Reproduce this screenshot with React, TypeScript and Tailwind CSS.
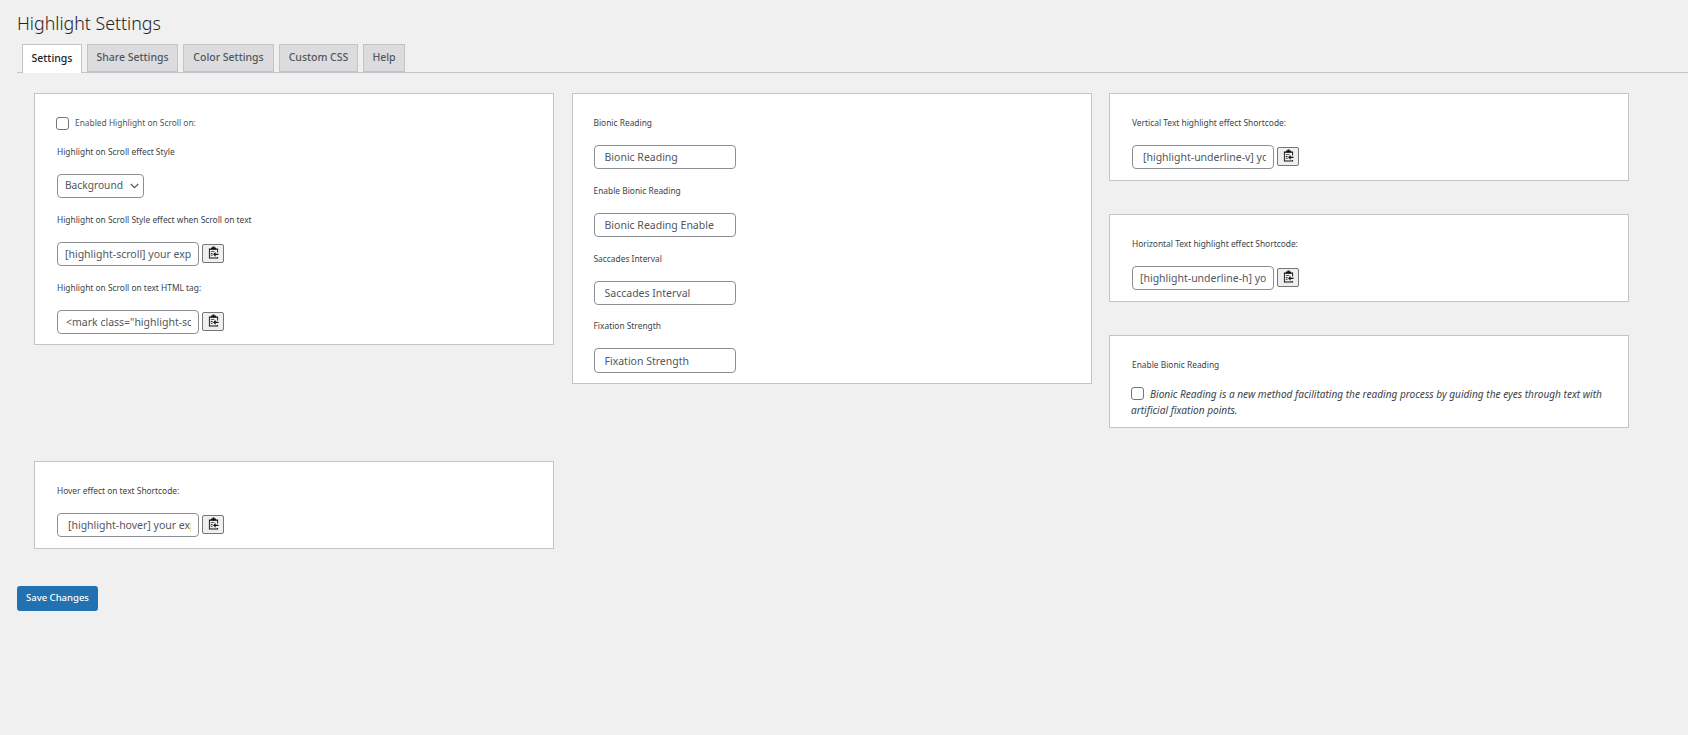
import React from 'react';

const font = 'font-["Noto_Sans","Open_Sans",sans-serif]';

function CopyIcon() {
    return (
        <svg width="11" height="13" viewBox="0 0 12 14" className="block">
            <path d="M1 2.500h2.500V1.500H5V.5h2v1h1.500v1H11V7h-1V4H2v8.500h8V12h1v1.500H1z" fill="#111" />
            <path d="M3.500 2h5v1.500h-5z" fill="#111" />
            <path d="M3 5.500h4v1H3zM3 7.500h2v1H3zM3 9.500h2v1H3z" fill="#333" />
            <path d="M11.500 8.300H8.300V6.500L5.500 9l2.800 2.500V9.700h3.200z" fill="#111" />
        </svg>
    );
}

function ShortcodeField({ value, inset }: { value: string; inset: string }) {
    return (
        <div className="flex items-start gap-[3px]">
            <input
                readOnly
                value={value}
                className={`h-[24px] w-[142px] rounded-[4px] border border-[#8c8f94] bg-white pr-[7px] text-[10.5px] text-[#50575e] outline-none ${inset}`}
            />
            <button type="button" className="mt-[2px] flex h-[19px] w-[22px] items-center justify-center rounded-[2px] border border-[#767676] bg-[#efefef] pb-[2px]">
                <CopyIcon />
            </button>
        </div>
    );
}

function TextField({ value, tall }: { value: string; tall?: boolean }) {
    return (
        <input
            readOnly
            value={value}
            className={`${tall ? 'h-[25px]' : 'h-[24px]'} block w-[142px] rounded-[4px] border border-[#8c8f94] bg-white px-[10px] text-[10.5px] text-[#50575e] outline-none`}
        />
    );
}

function Label({ children }: { children: React.ReactNode }) {
    return <p className="h-[14px] text-[8.4px] leading-[14px] text-[#3c434a]">{children}</p>;
}

function Checkbox() {
    return <input type="checkbox" className="h-[13px] w-[13px] shrink-0 appearance-none rounded-[3px] border border-[#767676] bg-white align-[-2px]" />;
}

function Card({ className, children }: { className?: string; children: React.ReactNode }) {
    return <div className={`border border-[#c3c4c7] bg-white ${className ?? ''}`}>{children}</div>;
}

const tabs = [
    { name: 'Share Settings', width: 'w-[91px]' },
    { name: 'Color Settings', width: 'w-[91px]' },
    { name: 'Custom CSS', width: 'w-[79px]' },
    { name: 'Help', width: 'w-[42px]' },
];

export default function App() {
    return (
        <div className={`h-[735px] w-full overflow-hidden bg-[#f0f0f1] pl-[17px] text-[#3c434a] ${font}`}>
            <h1 className="h-[44px] pt-[8px] text-[17.8px] font-light leading-[30px] text-[#1d2327]">Highlight Settings</h1>

            <div className="flex h-[29px] gap-[5px] border-b border-[#c3c4c7] pl-[5px]">
                <div className="flex h-[29px] w-[60px] items-center justify-center border border-b-0 border-[#c3c4c7] bg-white text-[10.5px] font-medium text-[#1d2327]">
                    Settings
                </div>
                {tabs.map((tab) => (
                    <div key={tab.name} className={`flex h-[28px] items-center justify-center border border-[#c3c4c7] bg-[#dcdcde] text-[10.5px] font-medium text-[#50575e] ${tab.width}`}>
                        {tab.name}
                    </div>
                ))}
            </div>

            <div className="flex gap-[17.5px] pl-[17px] pt-[20px]">
                <div className="flex w-[520px] flex-col gap-[116px]">
                    <Card className="h-[252px] pl-[22px] pt-[22px]">
                        <div className="-ml-[1px] flex h-[14px] items-center gap-[6px]">
                            <Checkbox />
                            <span className="text-[8.4px] text-[#50575e]">Enabled Highlight on Scroll on:</span>
                        </div>
                        <div className="mt-[15px]"><Label>Highlight on Scroll effect Style</Label></div>
                        <div className="relative mt-[15px] h-[24px] w-[87px]">
                            <select className="block h-[24px] w-[87px] appearance-none rounded-[4px] border border-[#8c8f94] bg-white pl-[7px] text-[10.2px] text-[#50575e] outline-none">
                                <option>Background</option>
                            </select>
                            <svg width="9" height="6" viewBox="0 0 9 6" className="pointer-events-none absolute right-[5px] top-[9px]">
                                <path d="M.8 1l3.700 3.700L8.200 1" fill="none" stroke="#50575e" strokeWidth="1.100" />
                            </svg>
                        </div>
                        <div className="mt-[15px]"><Label>Highlight on Scroll Style effect when Scroll on text</Label></div>
                        <div className="mt-[15px]"><ShortcodeField value="[highlight-scroll] your explanation" inset="pl-[7px]" /></div>
                        <div className="mt-[15px]"><Label>Highlight on Scroll on text HTML tag:</Label></div>
                        <div className="mt-[15px]"><ShortcodeField value={'<mark class="highlight-scroll">'} inset="pl-[8px]" /></div>
                    </Card>
                    <Card className="h-[88px] pl-[22px] pt-[22px]">
                        <Label>Hover effect on text Shortcode:</Label>
                        <div className="mt-[15px]"><ShortcodeField value="[highlight-hover] your explanation" inset="pl-[10px]" /></div>
                    </Card>
                </div>

                <div className="w-[520px]">
                    <Card className="h-[291px] pl-[21px] pt-[22px]">
                        <Label>Bionic Reading</Label>
                        <div className="mt-[15px]"><TextField value="Bionic Reading" /></div>
                        <div className="mt-[15px]"><Label>Enable Bionic Reading</Label></div>
                        <div className="mt-[15px]"><TextField value="Bionic Reading Enable" /></div>
                        <div className="mt-[15px]"><Label>Saccades Interval</Label></div>
                        <div className="mt-[15px]"><TextField value="Saccades Interval" /></div>
                        <div className="mt-[14px]"><Label>Fixation Strength</Label></div>
                        <div className="mt-[15px]"><TextField value="Fixation Strength" tall /></div>
                    </Card>
                </div>

                <div className="flex w-[520px] flex-col gap-[33px]">
                    <Card className="h-[88px] pl-[22px] pt-[22px]">
                        <Label>Vertical Text highlight effect Shortcode:</Label>
                        <div className="mt-[15px]"><ShortcodeField value="[highlight-underline-v] your explanation" inset="pl-[10px]" /></div>
                    </Card>
                    <Card className="h-[88px] pl-[22px] pt-[22px]">
                        <Label>Horizontal Text highlight effect Shortcode:</Label>
                        <div className="mt-[15px]"><ShortcodeField value="[highlight-underline-h] your explanation" inset="pl-[7px]" /></div>
                    </Card>
                    <Card className="h-[93px] pl-[22px] pr-[20px] pt-[22px]">
                        <Label>Enable Bionic Reading</Label>
                        <p className="-ml-[1px] mt-[15px] text-[10.1px] italic leading-[15.5px] text-[#3c434a]">
                            <Checkbox />
                            <span className="ml-[6px]">Bionic Reading is a new method facilitating the reading process by guiding the eyes through text with artificial fixation points.</span>
                        </p>
                    </Card>
                </div>
            </div>

            <button type="button" className="mt-[37px] h-[25px] w-[81px] rounded-[3px] bg-[#2271b1] text-[9.5px] font-medium text-white">
                Save Changes
            </button>
        </div>
    );
}
